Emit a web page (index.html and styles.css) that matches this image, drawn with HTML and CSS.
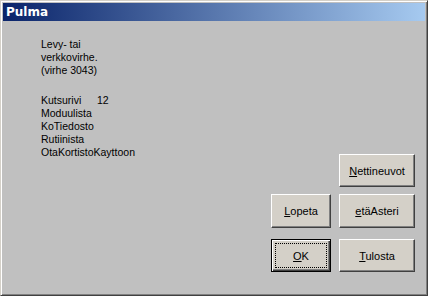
FILE: index.html
```html
<!DOCTYPE html>
<html lang="fi">
<head>
    <meta charset="UTF-8">
    <title>Pulma</title>
    <link rel="stylesheet" href="styles.css">
</head>
<body>
    <div class="window">
        <div class="titlebar">Pulma</div>
        <div class="content">
            <div class="message">
                <p>Levy- tai<br>verkkovirhe.<br>(virhe 3043)</p>
                <p><span class="label">Kutsurivi</span>12<br>Moduulista<br>KoTiedosto<br>Rutiinista<br>OtaKortistoKayttoon</p>
            </div>
            <div class="buttons">
                <button class="btn net"><u>N</u>ettineuvot</button>
                <button class="btn"><u>L</u>opeta</button>
                <button class="btn"><u>e</u>täAsteri</button>
                <button class="btn default"><span class="focus"><u>O</u>K</span></button>
                <button class="btn"><u>T</u>ulosta</button>
            </div>
        </div>
    </div>
</body>
</html>
```

FILE: styles.css
```css
html, body {
    margin: 0;
    padding: 0;
}
body {
    width: 428px;
    height: 296px;
    overflow: hidden;
    font-family: "Liberation Sans", Arial, sans-serif;
    font-size: 11px;
    color: #000;
}
.window {
    box-sizing: border-box;
    width: 428px;
    height: 296px;
    background: #c0c0c0;
    border-top: 1px solid #d4d0c8;
    border-left: 1px solid #d4d0c8;
    border-right: 1px solid #404040;
    border-bottom: 1px solid #404040;
    box-shadow: inset 1px 1px 0 #fff, inset -1px -1px 0 #808080;
    padding: 2px;
    display: flex;
    flex-direction: column;
}
.titlebar {
    height: 18px;
    line-height: 18px;
    padding-left: 3px;
    color: #fff;
    font-weight: bold;
    font-size: 12px;
    font-family: "DejaVu Sans", Verdana, sans-serif;
    background: linear-gradient(to right, #0a246a, #a6caf0);
}
.content {
    flex: 1;
    display: flex;
    padding: 0 10px 21px 38px;
}
.message {
    padding-top: 17px;
    line-height: 13px;
    font-size: 10.5px;
}
.message p {
    margin: 0 0 17px 0;
}
.label {
    display: inline-block;
    width: 56px;
}
.buttons {
    margin-left: auto;
    align-self: flex-end;
    display: grid;
    grid-template-columns: 60px 76px;
    grid-template-rows: 33px 34px 37px;
    column-gap: 8px;
    row-gap: 7px;
    align-items: end;
}
.btn {
    box-sizing: border-box;
    height: 33px;
    padding: 0;
    font-family: "Liberation Sans", Arial, sans-serif;
    font-size: 11px;
    color: #000;
    background: #d4d0c8;
    border: 1px solid;
    border-color: #fff #404040 #404040 #fff;
    box-shadow: inset -1px -1px 0 #808080;
}
.btn:nth-child(2), .btn:nth-child(3) {
    height: 34px;
}
.net {
    grid-column: 2;
}
.default {
    border: 1px solid #000;
    box-shadow: inset 1px 1px 0 #fff, inset -1px -1px 0 #404040, inset -2px -2px 0 #808080;
    padding: 3px;
}
.focus {
    display: flex;
    align-items: center;
    justify-content: center;
    height: 100%;
    border: 1px dotted #000;
    box-sizing: border-box;
}
```
